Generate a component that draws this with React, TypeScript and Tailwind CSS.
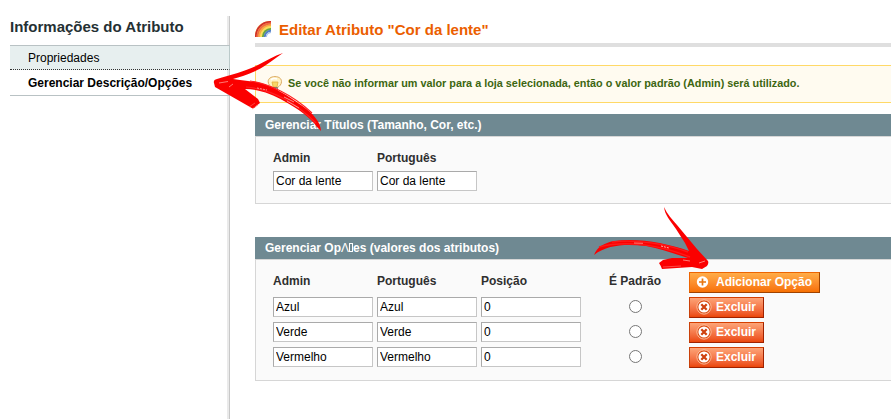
import type { ReactNode } from 'react';

const OPTIONS = ['Azul', 'Verde', 'Vermelho'];

function TextInput({ value }: { value: string }) {
  return (
    <input
      type="text"
      defaultValue={value}
      className="block h-5 w-[100px] border border-t-[#aaa] border-r-[#c6c6c6] border-b-[#c6c6c6] border-l-[#aaa] bg-white px-0.5 text-xs leading-[15px] text-black"
    />
  );
}

function RainbowIcon() {
  return (
    <svg className="h-4 w-4 shrink-0" viewBox="0 0 16 16" fill="none">
      <path d="M0 16V13C1 6 6 1 13 0h3v9c-4 1-6 3-7 7z" fill="#f7b45a" />
      <path d="M.8 16C.8 7 7 .8 16 .8" stroke="#cf2f2c" strokeWidth="1.700" />
      <path d="M2.500 16C2.500 8.500 8.500 2.500 16 2.500" stroke="#ef6b3f" strokeWidth="1.800" />
      <path d="M4.300 16C4.300 9.500 9.500 4.300 16 4.300" stroke="#f9a843" strokeWidth="1.800" />
      <path d="M6 16C6 10.500 10.500 6 16 6" stroke="#f8e05a" strokeWidth="1.800" />
      <path d="M7.800 16C7.800 11.500 11.500 7.800 16 7.800" stroke="#62a943" strokeWidth="1.800" />
      <path d="M9.700 16C9.700 12.500 12.500 9.700 16 9.700" stroke="#5080c8" strokeWidth="2" />
      <path d="M11.300 16C11.500 13.500 13.500 11.500 16 11.300" stroke="#a9c2ea" strokeWidth="1.200" />
    </svg>
  );
}

function BulbIcon() {
  return (
    <svg className="h-4 w-4 shrink-0" viewBox="0 0 16 16" fill="none">
      <path d="M5.500 11.500C2.800 10 1.200 8.500 1.200 5.500 1.200 2.500 4 .6 8 .6s6.500 2 6.500 5c0 3-2 4.500-4 6z" fill="#fff3c4" stroke="#dba860" />
      <path d="M5 6h6L10 11H6.200z" fill="#f8d765" stroke="#e3ad3c" strokeWidth=".8" />
      <path d="M4 4c1-1.500 4-2 6-1" stroke="#fff" strokeWidth="1.500" />
      <path d="M5.500 11.500h5v3l-1.500 1h-2l-1.500-1z" fill="#8f8d8a" stroke="#6a6864" strokeWidth=".6" />
      <path d="M6 13h4" stroke="#ddd" />
    </svg>
  );
}

function AddIcon() {
  return (
    <svg className="mb-px h-4 w-4 shrink-0" viewBox="0 0 16 16">
      <circle cx="7.500" cy="8" r="5.700" fill="#fff" />
      <path d="M7.500 4.500v7M4 8h7" stroke="#e8750f" strokeWidth="1.700" />
    </svg>
  );
}

function DeleteIcon() {
  return (
    <svg className="mb-0.5 h-4 w-4 shrink-0" viewBox="0 0 16 16">
      <circle cx="8" cy="8" r="7.100" fill="#d9480e" stroke="#ffc6a5" strokeWidth=".9" />
      <circle cx="8" cy="8" r="5.600" fill="#fff" />
      <path d="M5.300 5.300l5.400 5.400M10.700 5.300l-5.400 5.400" stroke="#cf420f" strokeWidth="2.300" />
    </svg>
  );
}

function Panel({ title, className, children }: { title: ReactNode; className: string; children: ReactNode }) {
  return (
    <section className={`flex flex-col ${className}`}>
      <h2 className="h-[22px] shrink-0 bg-[#6f8992] pl-2.5 text-xs leading-[22px] font-bold text-white">{title}</h2>
      <div className="grow border border-r-0 border-[#d6d6d6] bg-[#fafafa] pl-[17px]">{children}</div>
    </section>
  );
}

function SidebarArrow() {
  return (
    <svg className="pointer-events-none absolute top-[40px] left-[200px] h-[100px] w-[140px]" viewBox="0 0 140 100" fill="none">
      <path d="M83 13C74 16 66 21 56 26 46 31 30 35 17 39Q13 40 14 43L15 47 50 67Q54 70 56 66L60 63 58 59 45 49C58 49 72 54 84 61 98 69 110 77 117 87L121 91C121 82 112 73 104 67 88 56 74 46 57 42L40 40 33 39 43 36C52 33 60 29 66 25 72 21 77 17 83 13Z" fill="#fb0000" />
      <path d="M50 41C68 43 93 55 112 73M46 47C70 49 93 60 116 83" stroke="#ff2020" strokeWidth="1.200" />
      <path d="M84 57l10 5M87 61l12 7" stroke="#ffb2ac" strokeWidth=".8" />
      <path d="M57 48l10 2" stroke="#ffa19c" strokeWidth=".9" strokeDasharray="2 1" />
      <path d="M19 43l9-1.500M29 47l4-3" stroke="#ff9992" strokeWidth=".8" />
      <path d="M49 67l6-4M52 69l6-4" stroke="#ff6b66" strokeWidth=".6" />
    </svg>
  );
}

function ButtonArrow() {
  return (
    <svg className="pointer-events-none absolute top-[200px] left-[580px] h-[80px] w-[150px]" viewBox="0 0 150 80" fill="none">
      <path d="M84 7C87 14 92 19 97 25L117 49 128 61Q129 63 127 66L122 69 112 67 82 69Q81 66 79 63L83 60 92 58 108 58C95 54 81 49 66 46 47 44 28 44 14 55 17 47 24 43 34 41 60 38 85 43 109 51L105 43 96 29C89 19 85 15 84 7Z" fill="#fb0000" />
      <path d="M19 47C47 40 80 45 110 57M32 42c25-3 54 2 76 10" stroke="#ff1919" strokeWidth="1.400" />
      <path d="M54 43l9 .3M103 60l7 1M119 63l6-2" stroke="#ff9b94" strokeWidth=".8" />
      <path d="M81 46l8 2" stroke="#ffb3af" strokeWidth="1" strokeDasharray="2 1" />
      <path d="M83 67l18-1" stroke="#ff7774" strokeWidth=".6" />
    </svg>
  );
}

export default function App() {
  return (
    <div className="relative flex h-[419px] w-[891px] overflow-hidden bg-white pt-4 font-['Liberation_Sans',Arial,sans-serif] text-xs text-[#2f2f2f]">
      <aside className="flex w-[230px] shrink-0 border-r border-[#c8c8c8] pl-2.5 shadow-[inset_-2px_0_0_#eaeaea]">
        <div className="-mr-px w-[220px] shrink-0">
          <h3 className="h-[29px] text-[15px] leading-[22px] font-bold text-[#253033]">Informações do Atributo</h3>
          <nav className="border-y border-[#b9c2c4]">
            <a className="block h-6 border-r border-b border-r-[#bbcaca] border-b-[#333] bg-[#e7efef] pl-[18px] leading-[24px] text-black [border-bottom-style:dotted]">Propriedades</a>
            <a className="block h-[25px] pl-[18px] leading-[26px] font-bold text-black">Gerenciar Descrição/Opções</a>
          </nav>
        </div>
      </aside>

      <main className="w-[636px] shrink-0 ml-[25px]">
        <header className="flex h-[31px] gap-2 border-b-4 border-[#dfdfdf] pt-[5px]">
          <RainbowIcon />
          <h1 className="text-[15px] leading-[18px] font-bold text-[#eb5e00]">Editar Atributo "Cor da lente"</h1>
        </header>

        <div className="mt-[18px] flex h-[38px] items-center border border-r-0 border-[#ffd967] bg-[#fffbf0] pl-[11px] text-[10.83px] font-bold text-[#3d6611]">
          <BulbIcon />
          <span className="mb-0.5 ml-[5px]">Se você não informar um valor para a loja selecionada, então o valor padrão (Admin) será utilizado.</span>
        </div>

        <Panel title="Gerenciar Títulos (Tamanho, Cor, etc.)" className="mt-[11px] h-[90px]">
          <div className="grid w-[204px] grid-cols-2 gap-x-1 pt-3">
            <strong className="h-[22px] leading-[18px]">Admin</strong>
            <strong className="h-[22px] leading-[18px]">Português</strong>
            <TextInput value="Cor da lente" />
            <TextInput value="Cor da lente" />
          </div>
        </Panel>

        <Panel
          title={<>Gerenciar Op<span className="inline-block w-[7.5px] leading-[9px] font-normal">Λ</span><span className="inline-block h-[9px] w-[4.5px] border border-white" />es (valores dos atributos)</>}
          className="mt-[33px] h-[144px]"
        >
          <div className="grid grid-cols-[100px_100px_100px_100px_131px] gap-x-1 gap-y-1 pt-3">
            <strong className="h-[21px] leading-[18px]">Admin</strong>
            <strong className="h-[21px] leading-[18px]">Português</strong>
            <strong className="h-[21px] leading-[18px]">Posição</strong>
            <strong className="h-[21px] text-center leading-[18px]">É Padrão</strong>
            <button className="flex h-[21px] items-center border border-t-[#ed6502] border-r-[#a04300] border-b-[#a04300] border-l-[#ed6502] bg-linear-to-b from-[#ffac47] to-[#f77000] pl-[5px] font-bold text-white">
              <AddIcon />
              <span className="mb-px ml-[5px] leading-[18px]">Adicionar Opção</span>
            </button>
            {OPTIONS.map((name) => (
              <div key={name} className="col-span-5 grid h-[21px] grid-cols-subgrid">
                <TextInput value={name} />
                <TextInput value={name} />
                <TextInput value="0" />
                <input type="radio" className="mt-[3px] ml-[44px] block h-[13px] w-[13px]" />
                <button className="flex h-[21px] w-[75px] items-center border border-t-[#d63f00] border-r-[#a02200] border-b-[#a02200] border-l-[#c94009] bg-linear-to-b from-[#fca477] to-[#eb4605] pl-[6px] font-bold text-white">
                  <DeleteIcon />
                  <span className="mb-px ml-1 leading-[18px]">Excluir</span>
                </button>
              </div>
            ))}
          </div>
        </Panel>
      </main>

      <SidebarArrow />
      <ButtonArrow />
    </div>
  );
}
